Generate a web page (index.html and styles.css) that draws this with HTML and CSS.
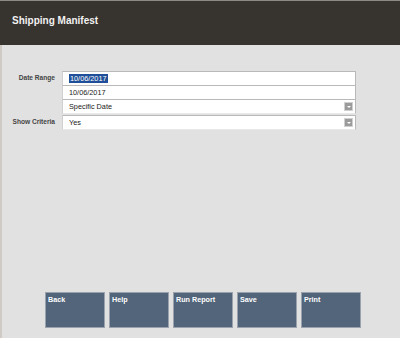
FILE: index.html
```html
<!DOCTYPE html>
<html>
<head>
<meta charset="utf-8">
<link rel="stylesheet" href="styles.css">
</head>
<body>
<div class="page">
  <header class="header"><h1 class="title">Shipping Manifest</h1></header>
  <main class="content">
    <div class="form">
      <div class="label">Date Range</div>
      <div class="fields">
        <div class="field"><span class="sel">10/06/2017</span></div>
        <div class="field">10/06/2017</div>
        <div class="field select">Specific Date<span class="arrow"></span></div>
      </div>
      <div class="label">Show Criteria</div>
      <div class="fields">
        <div class="field select">Yes<span class="arrow"></span></div>
      </div>
    </div>
    <div class="buttons">
      <div class="btn">Back</div>
      <div class="btn">Help</div>
      <div class="btn">Run Report</div>
      <div class="btn">Save</div>
      <div class="btn">Print</div>
    </div>
  </main>
</div>
</body>
</html>
```
FILE: styles.css
```css
html, body { margin: 0; padding: 0; }
body { background: #e1e1e1; font-family: "Liberation Sans", Arial, sans-serif; }
.page { width: 400px; height: 338px; display: flex; flex-direction: column; }
.header {
  height: 44px; background: #37332f; border-top: 1px solid #8c8a87;
  display: flex; align-items: center; padding-left: 12px; flex: none;
}
.title { margin: 0; color: #f2f2f2; font-size: 10px; font-weight: bold; padding-bottom: 5px; }
.content {
  flex: 1; display: flex; flex-direction: column;
  border-left: 2px solid #cfcac3; padding-top: 26px;
}
.form {
  display: grid; grid-template-columns: 53px 294px; column-gap: 7px; row-gap: 1px;
}
.label {
  text-align: right; font-size: 6.6px; font-weight: bold; color: #444; padding-top: 3px;
}
.fields { display: flex; flex-direction: column; }
.field {
  box-sizing: border-box; height: 14px; background: #fff;
  border: 1px solid #b9b9b9; border-bottom: none; border-left-color: #cfcfcf;
  font-size: 7.3px; color: #222; padding-left: 6px; line-height: 13px;
  display: flex; align-items: center; position: relative;
}
.field:last-child { border-bottom: 1px solid #e8e8e8; height: 15px; }
.sel { background: #1f4f98; color: #fff; padding: 0 1px; line-height: 9px; }
.arrow {
  position: absolute; right: 2px; top: 2px; width: 9px; height: 9px;
  background: #9b9b9b; border: 1px solid #d0d0d0; box-sizing: border-box;
}
.arrow::after {
  content: ""; position: absolute; left: 2px; top: 3px;
  border-left: 2px solid transparent; border-right: 2px solid transparent;
  border-top: 2px solid #fff;
}
.buttons {
  margin-top: auto; margin-bottom: 10px; display: flex; gap: 4px; padding-left: 43px;
}
.btn {
  width: 60px; height: 36px; box-sizing: border-box; background: #52657a;
  border: 1px solid #9aa3ad; color: #fff; font-size: 7.2px; font-weight: bold;
  padding: 2px 2px;
}
```
